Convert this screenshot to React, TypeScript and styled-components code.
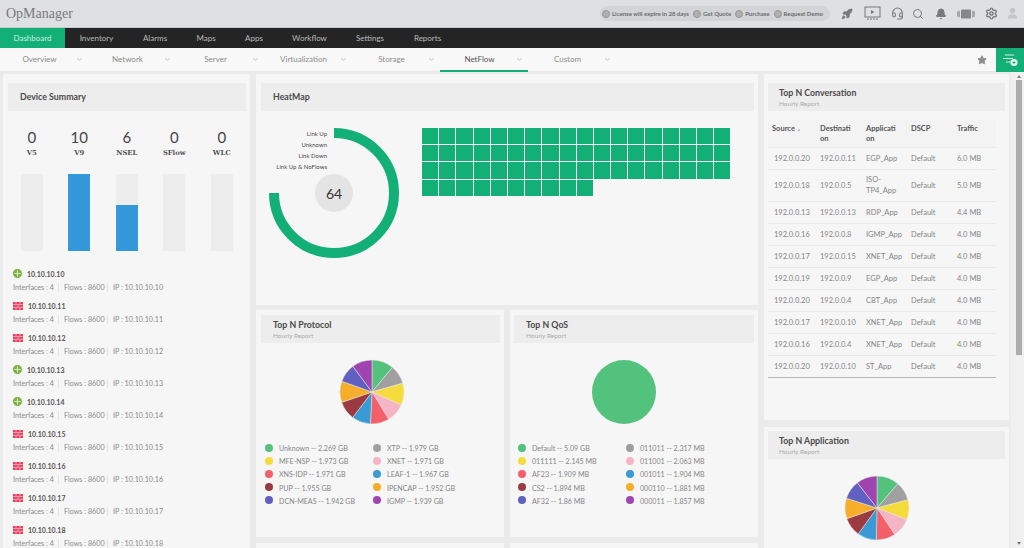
import React from "react";
import styled, { createGlobalStyle } from "styled-components";
import { Bell, ChevronDown, Headset, Rocket, Search, Settings, Star, User } from "lucide-react";

const GlobalStyle = createGlobalStyle`
  html, body {
    margin: 0;
    padding: 0;
    width: 1024px;
    height: 548px;
    overflow: hidden;
    background: #ebebeb;
    font-family: "Lato", "Liberation Sans", sans-serif;
  }
  * { box-sizing: border-box; }
`;

const Page = styled.div`
  width: 1024px;
  height: 548px;
  display: flex;
  flex-direction: column;
  overflow: hidden;
`;

const TopBar = styled.header`
  height: 28px;
  flex: none;
  display: flex;
  align-items: center;
  padding: 0 0 0 6px;
  background: #dfe0e2;
  border-bottom: 1px solid #c9cacc;
`;

const Logo = styled.div`
  font-family: "Liberation Serif", serif;
  font-size: 14px;
  color: #77797b;
  width: 594px;
`;

const LicensePill = styled.div`
  width: 230px;
  height: 15px;
  flex: none;
  display: flex;
  align-items: center;
  padding-left: 2px;
  border-radius: 8px;
  background: #d3d4d6;
  font-size: 6px;
  font-weight: 700;
  color: #6a6c6e;
  white-space: nowrap;
`;

const PillDot = styled.span`
  width: 8px;
  height: 8px;
  flex: none;
  margin: 0 2px 0 ${(p) => p.$gap}px;
  border-radius: 50%;
  background: #aeb0b2;
  border: 1px solid #949698;
`;

const TopIcons = styled.div`
  display: flex;
  align-items: center;
  color: #77797b;
  margin-left: 9px;
`;

const TopIcon = styled.span`
  width: ${(p) => p.$w}px;
  flex: none;
  display: flex;
  justify-content: center;
`;

const MainNav = styled.nav`
  height: 20px;
  flex: none;
  display: flex;
  background: #242424;
  font-size: 8px;
  color: #b9bbbb;
`;

const MainTab = styled.div`
  width: ${(p) => p.$w}px;
  display: flex;
  align-items: center;
  justify-content: center;
  background: ${(p) => (p.$active ? "#12b076" : "transparent")};
  color: ${(p) => (p.$active ? "#cfeee2" : "#b9bbbb")};
`;

const SubNav = styled.nav`
  height: 24px;
  flex: none;
  display: flex;
  background: #f8f8f8;
  border-bottom: 1px solid #e6e6e6;
`;

const SubTab = styled.div`
  width: 88px;
  display: flex;
  align-items: center;
  padding: 0 5px 0 3px;
  font-size: 8px;
  color: ${(p) => (p.$active ? "#555" : "#8b8b8b")};
  border-bottom: 2px solid ${(p) => (p.$active ? "#12b076" : "transparent")};
  margin-bottom: -1px;
`;

const SubLabel = styled.span`
  flex: 1;
  text-align: center;
`;

const SubNavEnd = styled.div`
  flex: 1;
  display: flex;
  justify-content: flex-end;
  align-items: center;
`;

const StarSlot = styled.span`
  display: flex;
  margin-right: 9px;
  color: #8d8d8d;
`;

const AddButton = styled.div`
  width: 28px;
  height: 24px;
  display: flex;
  align-items: center;
  justify-content: center;
  background: #12b076;
`;

const Body = styled.main`
  flex: 1;
  min-height: 0;
  display: flex;
  overflow: hidden;
  padding: 2px 0 0 3px;
  gap: 6px;
`;

const Column = styled.div`
  width: ${(p) => p.$w}px;
  flex: none;
  display: flex;
  flex-direction: column;
  gap: ${(p) => p.$gap || 0}px;
`;

const Card = styled.section`
  background: #f6f6f6;
  padding: ${(p) => p.$top}px 4px 0 ${(p) => p.$left ?? 5}px;
  height: ${(p) => (p.$h ? `${p.$h}px` : "auto")};
  width: ${(p) => (p.$w ? `${p.$w}px` : "auto")};
  flex: ${(p) => (p.$h ? "none" : "1")};
  overflow: hidden;
`;

const CardHeader = styled.div`
  height: 28px;
  background: #ededed;
  display: flex;
  flex-direction: column;
  justify-content: center;
  padding-left: ${(p) => p.$pad}px;
`;

const Title = styled.h3`
  margin: 0;
  font-size: 8.8px;
  line-height: 12px;
  font-weight: 700;
  color: #4a4a4a;
`;

const SubTitle = styled.div`
  font-size: 6.5px;
  line-height: 9px;
  color: #aaa;
`;

const CountRow = styled.div`
  display: grid;
  grid-template-columns: repeat(5, 47.5px);
  margin: 19px 0 0 0;
  text-align: center;
`;

const Count = styled.div`
  font-size: 15px;
  line-height: 15px;
  color: #444;
`;

const CountLabel = styled.div`
  font-family: "DejaVu Serif", "Liberation Serif", serif;
  font-size: 6.8px;
  font-weight: 700;
  line-height: 12px;
  margin-top: 2px;
  color: #555;
`;

const BarTrack = styled.div`
  width: 22px;
  height: 77px;
  margin: 15px auto 0;
  display: flex;
  align-items: flex-end;
  background: #ededed;
`;

const BarFill = styled.div`
  width: 100%;
  background: #3498db;
`;

const DeviceList = styled.div`
  margin: 16px 0 0 5px;
  display: flex;
  flex-direction: column;
  gap: 5px;
`;

const DeviceName = styled.div`
  display: flex;
  align-items: center;
  gap: 5px;
  height: 13px;
  font-size: 7px;
  font-weight: 700;
  color: #555;
`;

const DeviceMeta = styled.div`
  display: flex;
  align-items: center;
  height: 14px;
  padding-top: 1px;
  font-size: 7.2px;
  color: #8a8a8a;
  white-space: nowrap;
`;

const MetaPart = styled.span`
  width: ${(p) => p.$w}px;
  flex: none;
  line-height: 9px;
  padding-left: ${(p) => (p.$first ? 0 : 5)}px;
  border-left: ${(p) => (p.$first ? "none" : "1px solid #e2e2e2")};
`;

const HeatBody = styled.div`
  display: flex;
  padding: 16px 0 0 7px;
  gap: 22px;
`;

const Donut = styled.div`
  position: relative;
  width: 132px;
  height: 132px;
  flex: none;
`;

const DonutLegend = styled.div`
  position: absolute;
  top: 1px;
  right: 73px;
  text-align: right;
  font-size: 6px;
  line-height: 11px;
  color: #4a4a4a;
  white-space: nowrap;
`;

const DonutCenter = styled.div`
  position: absolute;
  left: 47px;
  top: 47px;
  width: 38px;
  height: 38px;
  border-radius: 50%;
  background: #e4e4e4;
  display: flex;
  align-items: center;
  justify-content: center;
  font-size: 14px;
  color: #333;
`;

const HeatGrid = styled.div`
  display: grid;
  grid-template-columns: repeat(18, 16.2px);
  grid-auto-rows: 16.2px;
  gap: 1px;
  margin-top: 1px;
  align-self: flex-start;
`;

const HeatCell = styled.div`
  background: #12b076;
`;

const PairRow = styled.div`
  display: flex;
  gap: 6px;
  margin-top: ${(p) => p.$mt || 0}px;
`;

const PieSlot = styled.div`
  display: flex;
  justify-content: center;
  margin: 16px ${(p) => p.$shift}px 0 0;
`;

const Legend = styled.div`
  display: grid;
  grid-template-columns: 108px 1fr;
  grid-auto-flow: column;
  grid-template-rows: repeat(5, 13.2px);
  margin: 17px 0 0 4px;
`;

const LegendItem = styled.div`
  display: flex;
  align-items: center;
  gap: 6px;
  font-size: 7.1px;
  color: #858585;
  white-space: nowrap;
`;

const LegendDot = styled.span`
  width: 8px;
  height: 8px;
  flex: none;
  margin-top: -2px;
  border-radius: 50%;
  background: ${(p) => p.$c};
`;

const Table = styled.table`
  width: 228px;
  margin-top: 9px;
  table-layout: fixed;
  border-collapse: collapse;
  font-size: 7.5px;
  color: #858585;
  border-bottom: 1px solid #b5b5b5;
`;

const Th = styled.th`
  width: ${(p) => p.$w}px;
  height: 27px;
  padding: 4px 7px 0 6px;
  background: #f3f3f3;
  font-weight: 700;
  line-height: 10px;
  text-align: left;
  vertical-align: top;
  color: #555;
  word-break: break-all;

  &:first-child {
    padding-left: 4px;
  }
`;

const SortMark = styled.span`
  font-size: 4px;
  font-weight: 400;
  color: #aaa;
  margin-left: 2px;
`;

const Tr = styled.tr`
  border-top: 1px solid #eaeaea;
`;

const Td = styled.td`
  height: ${(p) => (p.$tall ? 32 : 22)}px;
  padding: 0 ${(p) => (p.$tall ? 4 : 0)}px 0 6px;
  line-height: 11px;
`;

const ScrollBar = styled.div`
  width: 13px;
  margin-left: -4px;
  margin-top: -2px;
  flex: none;
  background: #f1f1f1;
  display: flex;
  flex-direction: column;
  align-items: center;
  padding: 3px 0 3px 3px;
`;

const ScrollThumb = styled.div`
  width: 6px;
  height: 275px;
  margin: 2px 0 auto;
  background: #acacac;
`;

const ScrollArrow = styled.span`
  width: 0;
  height: 0;
  border-left: 2px solid transparent;
  border-right: 2px solid transparent;
  border-bottom: ${(p) => (p.$down ? "none" : "3px solid #777")};
  border-top: ${(p) => (p.$down ? "3px solid #777" : "none")};
`;

const mainTabs: [string, number][] = [
  ["Dashboard", 65], ["Inventory", 63], ["Alarms", 54], ["Maps", 48], ["Apps", 48],
  ["Workflow", 63], ["Settings", 58], ["Reports", 57],
];
const subTabs = ["Overview", "Network", "Server", "Virtualization", "Storage", "NetFlow", "Custom"];

const devices: [string, boolean][] = [
  ["10.10.10.10", true], ["10.10.10.11", false], ["10.10.10.12", false], ["10.10.10.13", true],
  ["10.10.10.14", true], ["10.10.10.15", false], ["10.10.10.16", false], ["10.10.10.17", false],
  ["10.10.10.18", false],
];

const flows = [
  { label: "V5", count: 0, pct: 0 },
  { label: "V9", count: 10, pct: 100 },
  { label: "NSEL", count: 6, pct: 60 },
  { label: "SFlow", count: 0, pct: 0 },
  { label: "WLC", count: 0, pct: 0 },
];

const pieColors = ["#52c27c", "#a0a0a0", "#f5dc3c", "#f4b6c6", "#f4606a", "#3a9bd4", "#9b3a40", "#f5ad2a", "#6060c0", "#a044b0"];

const protocols: [string, string][] = [
  ["Unknown -- 2.269 GB", "XTP -- 1.979 GB"], ["MFE-NSP -- 1.973 GB", "XNET -- 1.971 GB"],
  ["XNS-IDP -- 1.971 GB", "LEAF-1 -- 1.967 GB"], ["PUP -- 1.955 GB", "IPENCAP -- 1.952 GB"],
  ["DCN-MEAS -- 1.942 GB", "IGMP -- 1.939 GB"],
];
const qos: [string, string][] = [
  ["Default -- 5.09 GB", "011011 -- 2.317 MB"], ["011111 -- 2.145 MB", "011001 -- 2.063 MB"],
  ["AF23 -- 1.909 MB", "001011 -- 1.904 MB"], ["CS2 -- 1.894 MB", "000110 -- 1.881 MB"],
  ["AF32 -- 1.86 MB", "000011 -- 1.857 MB"],
];
const protocolValues = [2.269, 1.979, 2.3, 1.971, 1.971, 1.967, 1.955, 2.2, 1.942, 2.1];
const appValues = [2.3, 1.95, 2.05, 1.98, 1.98, 1.97, 1.95, 2.1, 1.95, 2.15];

const conversations = [
  ["192.0.0.20", "192.0.0.11", "EGP_App", "Default", "6.0 MB"],
  ["192.0.0.18", "192.0.0.5", "ISO-TP4_App", "Default", "5.0 MB"],
  ["192.0.0.13", "192.0.0.13", "RDP_App", "Default", "4.4 MB"],
  ["192.0.0.16", "192.0.0.8", "IGMP_App", "Default", "4.0 MB"],
  ["192.0.0.17", "192.0.0.15", "XNET_App", "Default", "4.0 MB"],
  ["192.0.0.19", "192.0.0.9", "EGP_App", "Default", "4.0 MB"],
  ["192.0.0.20", "192.0.0.4", "CBT_App", "Default", "4.0 MB"],
  ["192.0.0.17", "192.0.0.10", "XNET_App", "Default", "4.0 MB"],
  ["192.0.0.16", "192.0.0.4", "XNET_App", "Default", "4.0 MB"],
  ["192.0.0.20", "192.0.0.10", "ST_App", "Default", "4.0 MB"],
];

const Pie = ({ values }: { values: number[] }) => {
  const total = values.reduce((a, b) => a + b, 0);
  let acc = 0;
  const pt = (v: number) => {
    const a = (v / total) * 2 * Math.PI;
    return `${33 + 32 * Math.sin(a)} ${33 - 32 * Math.cos(a)}`;
  };
  return (
    <svg width="66" height="66" viewBox="0 0 66 66">
      {values.length === 1 && <circle cx="33" cy="33" r="32" fill={pieColors[0]} />}
      {values.length > 1 &&
        values.map((v, i) => {
          const d = `M33 33L${pt(acc)}A32 32 0 0 1 ${pt(acc + v)}Z`;
          acc += v;
          return <path key={i} d={d} fill={pieColors[i]} stroke="#e8e8e8" strokeWidth="0.5" />;
        })}
    </svg>
  );
};

const UpIcon = () => (
  <svg width="9" height="9" viewBox="0 0 9 9">
    <circle cx="4.5" cy="4.5" r="4.5" fill="#7cb342" />
    <path d="M4.5 1.5v6M1.5 4.5h6" stroke="#d8ebc4" strokeWidth="1" />
  </svg>
);

const DownIcon = () => (
  <svg width="10" height="8" viewBox="0 0 10 8">
    <rect width="10" height="8" fill="#ee3d5c" />
    <path d="M0 2.6h10M0 5.3h10M3 0v2.6M7 0v2.6M5 2.6v2.7M3 5.3V8M7 5.3V8" stroke="#f9c5cf" strokeWidth="0.7" />
  </svg>
);

const ScreenIcon = () => (
  <svg width="17" height="15" viewBox="0 0 17 15" fill="none">
    <rect x="1" y="1" width="15" height="10" stroke="#77797b" />
    <path d="M7 4l3.5 2L7 8z" fill="#77797b" />
    <path d="M3 13h2M6 13h2M9 13h2M12 13h2" stroke="#77797b" />
  </svg>
);

const TicketIcon = () => (
  <svg width="18" height="10" viewBox="0 0 18 10">
    <path d="M0 2.5l3-1v7l-3-1zM18 2.5l-3-1v7l3-1z" fill="#a5a7a9" />
    <rect x="4" y="0.5" width="10" height="9" rx="1" fill="#85878a" />
  </svg>
);

const AddIcon = () => (
  <svg width="16" height="14" viewBox="0 0 16 14" fill="none">
    <path d="M3 2h9M1 5.5h10M4 9h5" stroke="#d4f1e5" strokeWidth="1" />
    <circle cx="12" cy="9.5" r="3.5" fill="#eefaf5" />
    <path d="M12 8v3M10.5 9.5h3" stroke="#12b076" strokeWidth="1" />
  </svg>
);

const ReportHeader = ({ title, pad = 12 }: { title: string; pad?: number }) => (
  <CardHeader $pad={pad}>
    <Title>{title}</Title>
    <SubTitle>Hourly Report</SubTitle>
  </CardHeader>
);

const LegendBlock = ({ rows }: { rows: [string, string][] }) => (
  <Legend>
    {[0, 1].flatMap((col) =>
      rows.map((r, i) => (
        <LegendItem key={r[col]}>
          <LegendDot $c={pieColors[i * 2 + col]} />
          {r[col]}
        </LegendItem>
      ))
    )}
  </Legend>
);

export default function App() {
  return (
    <Page>
      <GlobalStyle />
      <TopBar>
        <Logo>OpManager</Logo>
        <LicensePill>
          <PillDot $gap={0} />License will expire in 28 days
          <PillDot $gap={4} />Get Quote
          <PillDot $gap={4} />Purchase
          <PillDot $gap={4} />Request Demo
        </LicensePill>
        <TopIcons>
          <TopIcon $w={16}><Rocket size={12} fill="#77797b" /></TopIcon>
          <TopIcon $w={34}><ScreenIcon /></TopIcon>
          <TopIcon $w={16}><Headset size={13} /></TopIcon>
          <TopIcon $w={26}><Search size={12} /></TopIcon>
          <TopIcon $w={20}><Bell size={12} fill="#77797b" /></TopIcon>
          <TopIcon $w={30}><TicketIcon /></TopIcon>
          <TopIcon $w={20}><Settings size={13} strokeWidth={2.6} /></TopIcon>
          <TopIcon $w={22}><User size={13} color="#c4c5c7" fill="#c4c5c7" /></TopIcon>
        </TopIcons>
      </TopBar>
      <MainNav>
        {mainTabs.map(([name, w], i) => (
          <MainTab key={name} $w={w} $active={i === 0}>{name}</MainTab>
        ))}
      </MainNav>
      <SubNav>
        {subTabs.map((name) => (
          <SubTab key={name} $active={name === "NetFlow"}>
            <SubLabel>{name}</SubLabel>
            <ChevronDown size={7} color="#9a9a9a" />
          </SubTab>
        ))}
        <SubNavEnd>
          <StarSlot><Star size={10} fill="#8d8d8d" /></StarSlot>
          <AddButton><AddIcon /></AddButton>
        </SubNavEnd>
      </SubNav>
      <Body>
        <Column $w={247}>
          <Card $top={9}>
            <CardHeader $pad={12}><Title>Device Summary</Title></CardHeader>
            <CountRow>
              {flows.map((f) => (
                <div key={f.label}>
                  <Count>{f.count}</Count>
                  <CountLabel>{f.label}</CountLabel>
                  <BarTrack>
                    <BarFill style={{ height: `${f.pct}%` }} />
                  </BarTrack>
                </div>
              ))}
            </CountRow>
            <DeviceList>
              {devices.map(([ip, up]) => (
                <div key={ip}>
                  <DeviceName>
                    {up ? <UpIcon /> : <DownIcon />}
                    {ip}
                  </DeviceName>
                  <DeviceMeta>
                    <MetaPart $w={45} $first>Interfaces : 4</MetaPart>
                    <MetaPart $w={49}>Flows : 8600</MetaPart>
                    <MetaPart $w={70}>IP : {ip}</MetaPart>
                  </DeviceMeta>
                </div>
              ))}
            </DeviceList>
          </Card>
        </Column>
        <Column $w={502} $gap={5}>
          <Card $top={9} $h={231}>
            <CardHeader $pad={12}><Title>HeatMap</Title></CardHeader>
            <HeatBody>
              <Donut>
                <svg width="132" height="132" viewBox="0 0 132 132">
                  <path d="M66 6A60 60 0 1 1 6 66" fill="none" stroke="#12b076" strokeWidth="10" />
                </svg>
                <DonutLegend>
                  <div>Link Up</div>
                  <div>Unknown</div>
                  <div>Link Down</div>
                  <div>Link Up &amp; NoFlows</div>
                </DonutLegend>
                <DonutCenter>64</DonutCenter>
              </Donut>
              <HeatGrid>
                {Array.from({ length: 64 }, (_, i) => <HeatCell key={i} />)}
              </HeatGrid>
            </HeatBody>
          </Card>
          <PairRow>
            <Card $top={5} $h={227} $w={248}>
              <ReportHeader title="Top N Protocol" />
              <PieSlot $shift={17}><Pie values={protocolValues} /></PieSlot>
              <LegendBlock rows={protocols} />
            </Card>
            <Card $top={5} $h={227} $w={248} $left={4}>
              <ReportHeader title="Top N QoS" />
              <PieSlot $shift={20}><Pie values={[1]} /></PieSlot>
              <LegendBlock rows={qos} />
            </Card>
          </PairRow>
          <PairRow $mt={1}>
            <Card $top={5} $h={10} $w={248} />
            <Card $top={5} $h={10} $w={248} />
          </PairRow>
        </Column>
        <Column $w={245} $gap={7}>
          <Card $top={9} $h={346} $left={4}>
            <ReportHeader title="Top N Conversation" pad={11} />
            <Table>
              <thead>
                <tr>
                  <Th $w={46}>Source<SortMark>▲</SortMark></Th>
                  <Th $w={46}>Destination</Th>
                  <Th $w={45}>Application</Th>
                  <Th $w={46}>DSCP</Th>
                  <Th $w={45}>Traffic</Th>
                </tr>
              </thead>
              <tbody>
                {conversations.map((row, i) => (
                  <Tr key={i}>
                    {row.map((cell, j) => <Td key={j} $tall={i === 1}>{cell}</Td>)}
                  </Tr>
                ))}
              </tbody>
            </Table>
          </Card>
          <Card $top={4} $left={4}>
            <ReportHeader title="Top N Application" pad={11} />
            <PieSlot $shift={19}><Pie values={appValues} /></PieSlot>
          </Card>
        </Column>
        <ScrollBar>
          <ScrollArrow />
          <ScrollThumb />
          <ScrollArrow $down />
        </ScrollBar>
      </Body>
    </Page>
  );
}
